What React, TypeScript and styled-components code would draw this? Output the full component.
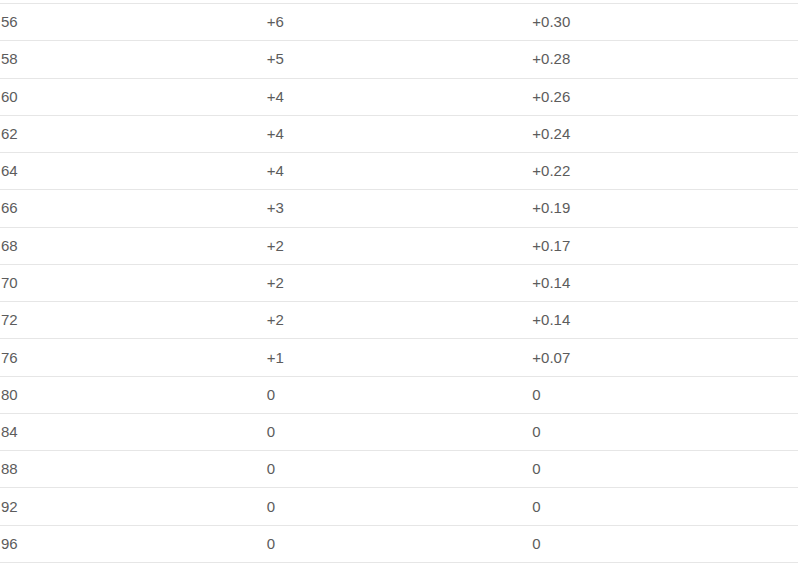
import React from "react";
import styled, { createGlobalStyle } from "styled-components";

const rows: [string, string, string][] = [
  ["56", "+6", "+0.30"],
  ["58", "+5", "+0.28"],
  ["60", "+4", "+0.26"],
  ["62", "+4", "+0.24"],
  ["64", "+4", "+0.22"],
  ["66", "+3", "+0.19"],
  ["68", "+2", "+0.17"],
  ["70", "+2", "+0.14"],
  ["72", "+2", "+0.14"],
  ["76", "+1", "+0.07"],
  ["80", "0", "0"],
  ["84", "0", "0"],
  ["88", "0", "0"],
  ["92", "0", "0"],
  ["96", "0", "0"]
];

const GlobalStyle = createGlobalStyle`
  body {
    margin: 0;
    background: #ffffff;
    font-family: "Liberation Sans", Arial, sans-serif;
  }
`;

const Table = styled.div`
  width: 798px;
  padding-top: 3px;
  border-top: 0;
`;

const Row = styled.div<{ $first?: boolean }>`
  display: grid;
  grid-template-columns: repeat(3, 1fr);
  align-items: center;
  height: 37.27px;
  box-sizing: border-box;
  border-top: 1px solid #e6e6e6;
  padding-left: 1px;
`;

const Cell = styled.div`
  font-size: 15px;
  color: #5c5c5c;
  line-height: 20px;
`;

const LastLine = styled.div`
  border-top: 1px solid #e6e6e6;
`;

export default function App() {
  return (
    <>
      <GlobalStyle />
      <Table>
        {rows.map((r) => (
          <Row key={r[0]}>
            <Cell>{r[0]}</Cell>
            <Cell>{r[1]}</Cell>
            <Cell>{r[2]}</Cell>
          </Row>
        ))}
        <LastLine />
      </Table>
    </>
  );
}
